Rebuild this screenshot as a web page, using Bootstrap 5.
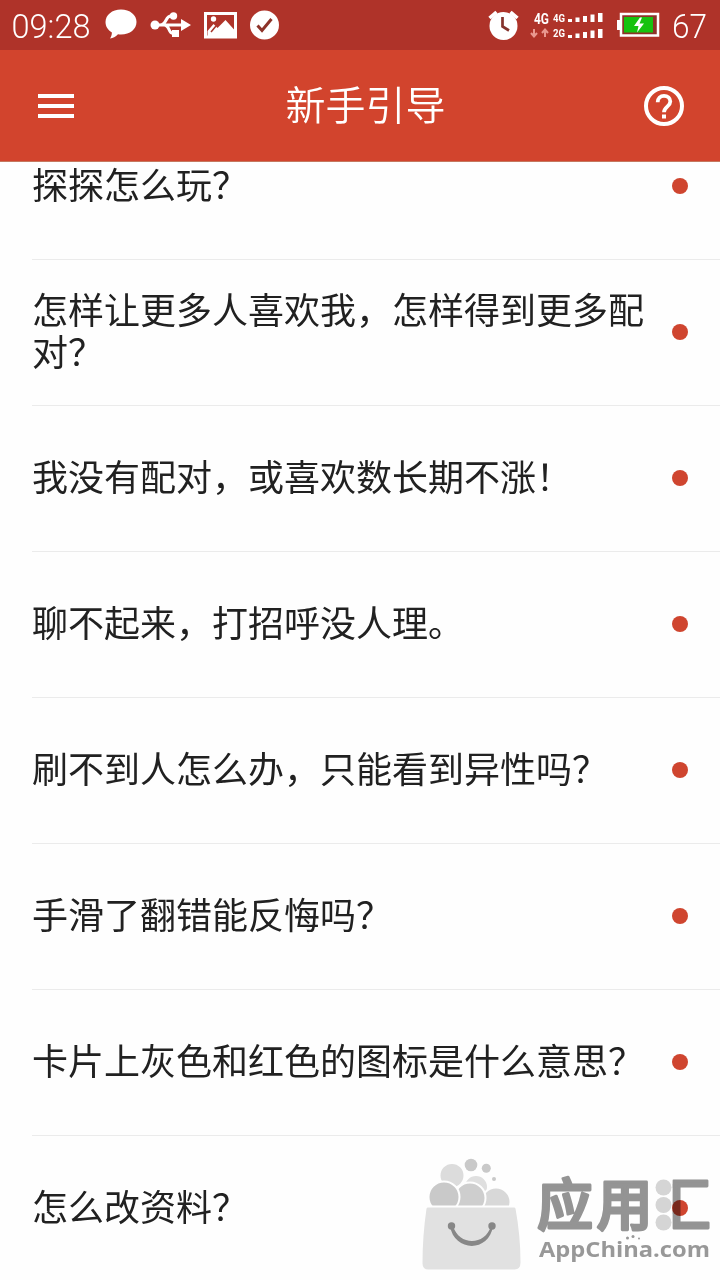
<!DOCTYPE html>
<html lang="zh-CN">
<head>
<meta charset="utf-8">
<meta name="viewport" content="width=device-width, initial-scale=1">
<title>新手引导</title>
<link href="https://cdn.jsdelivr.net/npm/bootstrap@5.3.0/dist/css/bootstrap.min.css" rel="stylesheet">
<style>
body{font-family:"Noto Sans CJK SC",sans-serif;color:#212121;background:#fefefe;height:1280px}
.status-strip{height:50px;background:#af3329;font-family:Roboto,sans-serif;font-weight:300;font-size:32px;line-height:50px;flex:none}
.status-strip svg{display:block;flex:none}
.title-strip{height:112px;background:#d2442d;border-bottom:1px solid #c5785f;flex:none;padding:0 35px 0 38px;z-index:2}
.title-strip h1{font-size:40px;font-weight:350;line-height:1;margin:0 0 5px 14px}
.faq-view{flex:1;min-height:0}
.faq-list{margin-top:-48px}
.faq-row{height:146px;margin-left:32px;padding:0 32px 2px 0;border:0;border-bottom:2px solid #ebebeb;background:transparent;color:#212121;font-size:36px;font-weight:400;line-height:42px;flex:none}
.faq-text{width:620px;padding-bottom:6px}
.unread{width:16px;height:16px;background:#cf452f}
.watermark{right:0;bottom:0;mix-blend-mode:multiply;pointer-events:none}
</style>
</head>
<body class="d-flex flex-column overflow-hidden position-relative">
<div class="status-strip d-flex align-items-center text-white">
  <svg width="290" height="50" viewBox="0 0 290 50" fill="#fff">
    <text x="11.500" y="38" font-size="33" textLength="79" lengthAdjust="spacingAndGlyphs">09:28</text>
    <path d="M121 9.500c9 0 15.500 5.500 15.500 12.500s-6.500 12.500-15.500 12.500c-1 0-2 0-3-.3-2.500 2.500-5 3.800-8 4.300 1.200-1.600 1.800-3.500 1.900-6-3.900-2.300-6.400-6.100-6.400-10.500C105.500 15 112 9.500 121 9.500z"/>
    <g stroke="#fff" stroke-width="3" fill="none"><path d="M155 25h30M160 25c7 0 5-9 11-9h2M164 25c6 0 4 8.500 9 8.500h2"/></g>
    <circle cx="155" cy="25" r="4.500"/><circle cx="173.500" cy="16" r="3.700"/><path d="M172 30h7v7h-7zM181 19l10 6-10 6z"/>
    <path fill-rule="evenodd" d="M204 12h33v26.500h-33zM207 15v20.500h27V15z"/><circle cx="213.500" cy="19" r="2.700"/><path d="M207.500 31l6-7 4 4 8-8 9 10v6h-27z"/><path d="M211 32l5-6" stroke="#a63228" stroke-width="1.500"/>
    <circle cx="264.500" cy="25" r="14.500"/><path d="M257.500 25.500l4.500 5 9.500-11.500" stroke="#8d3329" stroke-width="3" fill="none"/>
  </svg>
  <svg class="ms-auto" width="240" height="50" viewBox="480 0 240 50" fill="#fff">
    <circle cx="503.500" cy="26" r="14"/><path d="M489.500 18l7-6M517.500 18l-7-6" stroke="#fff" stroke-width="3.500"/><path d="M502.500 17v9.500l6.500 4" stroke="#85332c" stroke-width="2.700" fill="none"/>
    <g font-weight="700"><text x="534" y="24" font-size="15" textLength="15" lengthAdjust="spacingAndGlyphs">4G</text><text x="553" y="22" font-size="11" textLength="12" lengthAdjust="spacingAndGlyphs">4G</text><text x="553" y="37" font-size="11" textLength="12" lengthAdjust="spacingAndGlyphs">2G</text></g>
    <path d="M534 29v7M531 33l3 3.500 3-3.500M545 37v-7M542 33l3-3.500 3 3.500" stroke="#e99990" stroke-width="2" fill="none"/>
    <path d="M568 19h4v3h-4zM575.500 17.500h4V22h-4zM583 16h4v6h-4zM590.500 14.500h4V22h-4zM598 13h4.500v9H598zM568 35h4v3h-4zM575.500 33.500h4V38h-4zM583 32h4v6h-4zM590.500 30.500h4V38h-4zM598 29h4.500v9H598z"/>
    <rect x="621" y="14" width="37" height="21.500" fill="#8d3329" stroke="#fff" stroke-width="2.500"/><path d="M617 20h4v10h-4z"/><path d="M624 17h29v15.500h-29z" fill="#16c20f"/><path d="M640 17.500l-6 8.500h4.500l-1.500 6.500 7-9h-4.500l2.500-6z"/>
    <text x="672" y="38" font-size="33" textLength="35" lengthAdjust="spacingAndGlyphs">67</text>
  </svg>
</div>
<header class="title-strip navbar d-flex flex-nowrap align-items-center justify-content-between text-white">
  <svg width="36" height="26" viewBox="0 0 36 26"><path d="M0 3h36M0 13h36M0 23h36" stroke="#fff" stroke-width="4"/></svg>
  <h1>新手引导</h1>
  <svg width="42" height="42" viewBox="0 0 42 42" fill="none" stroke="#fff"><circle cx="21" cy="21" r="18" stroke-width="4"/><path d="M14.700 17.200c0-4 2.700-6.400 6.300-6.400s6.300 2.400 6.300 5.800c0 5-6.300 5.200-6.300 10.700" stroke-width="3.800"/><path d="M19 29.500h4v4h-4z" fill="#fff" stroke="none"/></svg>
</header>
<main class="faq-view overflow-hidden">
  <div class="faq-list list-group list-group-flush">
    <div class="faq-row list-group-item d-flex align-items-center justify-content-between"><span class="faq-text">探探怎么玩？</span><span class="unread rounded-circle"></span></div>
    <div class="faq-row list-group-item d-flex align-items-center justify-content-between"><span class="faq-text">怎样让更多人喜欢我，怎样得到更多配对？</span><span class="unread rounded-circle"></span></div>
    <div class="faq-row list-group-item d-flex align-items-center justify-content-between"><span class="faq-text">我没有配对，或喜欢数长期不涨！</span><span class="unread rounded-circle"></span></div>
    <div class="faq-row list-group-item d-flex align-items-center justify-content-between"><span class="faq-text">聊不起来，打招呼没人理。</span><span class="unread rounded-circle"></span></div>
    <div class="faq-row list-group-item d-flex align-items-center justify-content-between"><span class="faq-text">刷不到人怎么办，只能看到异性吗？</span><span class="unread rounded-circle"></span></div>
    <div class="faq-row list-group-item d-flex align-items-center justify-content-between"><span class="faq-text">手滑了翻错能反悔吗？</span><span class="unread rounded-circle"></span></div>
    <div class="faq-row list-group-item d-flex align-items-center justify-content-between"><span class="faq-text">卡片上灰色和红色的图标是什么意思？</span><span class="unread rounded-circle"></span></div>
    <div class="faq-row list-group-item d-flex align-items-center justify-content-between"><span class="faq-text">怎么改资料？</span><span class="unread rounded-circle"></span></div>
  </div>
</main>
<svg class="watermark position-absolute" width="310" height="130" viewBox="410 1150 310 130">
  <g stroke="#fff" stroke-width="2">
    <circle cx="452" cy="1175.500" r="12.500" fill="#ddd"/><circle cx="476" cy="1187" r="12" fill="#e0e0e0"/><circle cx="496" cy="1202" r="14.500" fill="#d9d9d9"/><circle cx="470" cy="1198" r="15.500" fill="#cfcfcf"/><circle cx="444" cy="1197" r="15.500" fill="#cacaca"/>
  </g>
  <g fill="#cacaca"><circle cx="471" cy="1165" r="6.300"/><circle cx="486.300" cy="1168.300" r="4.500"/><circle cx="494" cy="1179" r="2"/></g>
  <path d="M428 1206.500h86q2 0 2.500 2 5 27 5 54 0 8-7 8h-86q-7 0-7-7 0-28 4-55 .5-2 2.500-2z" fill="#e2e2e2" stroke="#fff" stroke-width="2"/>
  <g fill="#888"><circle cx="451.500" cy="1226" r="3.700"/><circle cx="492" cy="1226" r="3.700"/><path d="M450 1226c4 26 39 27 43 0h-2c-6 20-32 20-38 0z"/></g>
  <text y="1225" x="537 596.500 654.500" font-size="56" font-weight="500" font-family="Noto Sans CJK SC, sans-serif" fill="#959595" stroke="#959595" stroke-width="2.800" stroke-linejoin="round" stroke-linecap="round">应用汇</text>
  <path d="M651 1173h21.500v63h-21.500z" fill="#fff"/>
  <g fill="#d6d6d6"><circle cx="663.500" cy="1187.500" r="8"/><circle cx="663.500" cy="1205" r="8"/><circle cx="663.500" cy="1222.500" r="8"/></g>
  <text x="539" y="1257" font-size="22" font-weight="700" font-family="Open Sans, sans-serif" fill="#999" textLength="171" lengthAdjust="spacingAndGlyphs">AppChina.com</text>
  <g fill="#999"><circle cx="627.500" cy="1238" r="1.500"/><circle cx="633" cy="1236.500" r="1.500"/><circle cx="639" cy="1238.500" r="1"/></g>
</svg>
<script src="https://cdn.jsdelivr.net/npm/bootstrap@5.3.0/dist/js/bootstrap.bundle.min.js"></script>
</body>
</html>
